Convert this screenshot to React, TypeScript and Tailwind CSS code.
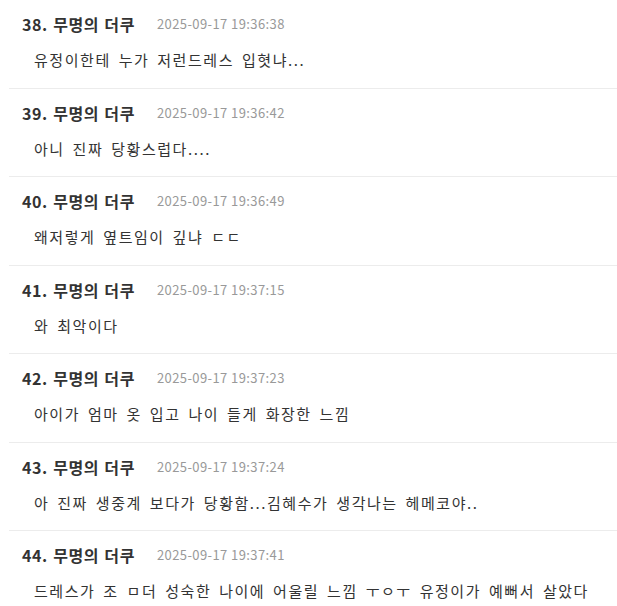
import React from "react";

type Comment = { no: number, name: string, date: string, text: string }

const comments: Comment[] = [
    {no: 38, name: "무명의 더쿠", date: "2025-09-17 19:36:38", text: "유정이한테 누가 저런드레스 입혓냐..."},
    {no: 39, name: "무명의 더쿠", date: "2025-09-17 19:36:42", text: "아니 진짜 당황스럽다...."},
    {no: 40, name: "무명의 더쿠", date: "2025-09-17 19:36:49", text: "왜저렇게 옆트임이 깊냐 ㄷㄷ"},
    {no: 41, name: "무명의 더쿠", date: "2025-09-17 19:37:15", text: "와 최악이다"},
    {no: 42, name: "무명의 더쿠", date: "2025-09-17 19:37:23", text: "아이가 엄마 옷 입고 나이 들게 화장한 느낌"},
    {no: 43, name: "무명의 더쿠", date: "2025-09-17 19:37:24", text: "아 진짜 생중계 보다가 당황함...김혜수가 생각나는 헤메코야.."},
    {no: 44, name: "무명의 더쿠", date: "2025-09-17 19:37:41", text: "드레스가 조 ㅁ더 성숙한 나이에 어울릴 느낌 ㅜㅇㅜ 유정이가 예뻐서 살았다"},
]

function CommentRow({c}: { c: Comment }) {
    return <li className="ml-[9px] h-[88.5px] border-b border-[#ececec] pt-[12px]">
        <div className="flex items-center h-[24px] pl-[13px]">
            <span className="text-[16px] font-bold text-[#333] tracking-[0.6px] [word-spacing:1px]">
                {c.no}. {c.name}
            </span>
            <span className="ml-[22px] text-[13px] text-[#999] tracking-[0.4px]">{c.date}</span>
        </div>
        <p className="mt-[12px] h-[24px] leading-[24px] pl-[25px] text-[15px] text-[#333] tracking-[1.55px] [word-spacing:3px]">
            {c.text}
        </p>
    </li>
}

export default function App() {
    return <div className="w-[617px] h-[606px] overflow-hidden bg-white"
                style={{fontFamily: '"Noto Sans CJK KR", "Noto Sans", sans-serif'}}>
        <ul>
            {comments.map(c => <CommentRow key={c.no} c={c}/>)}
        </ul>
    </div>
}
